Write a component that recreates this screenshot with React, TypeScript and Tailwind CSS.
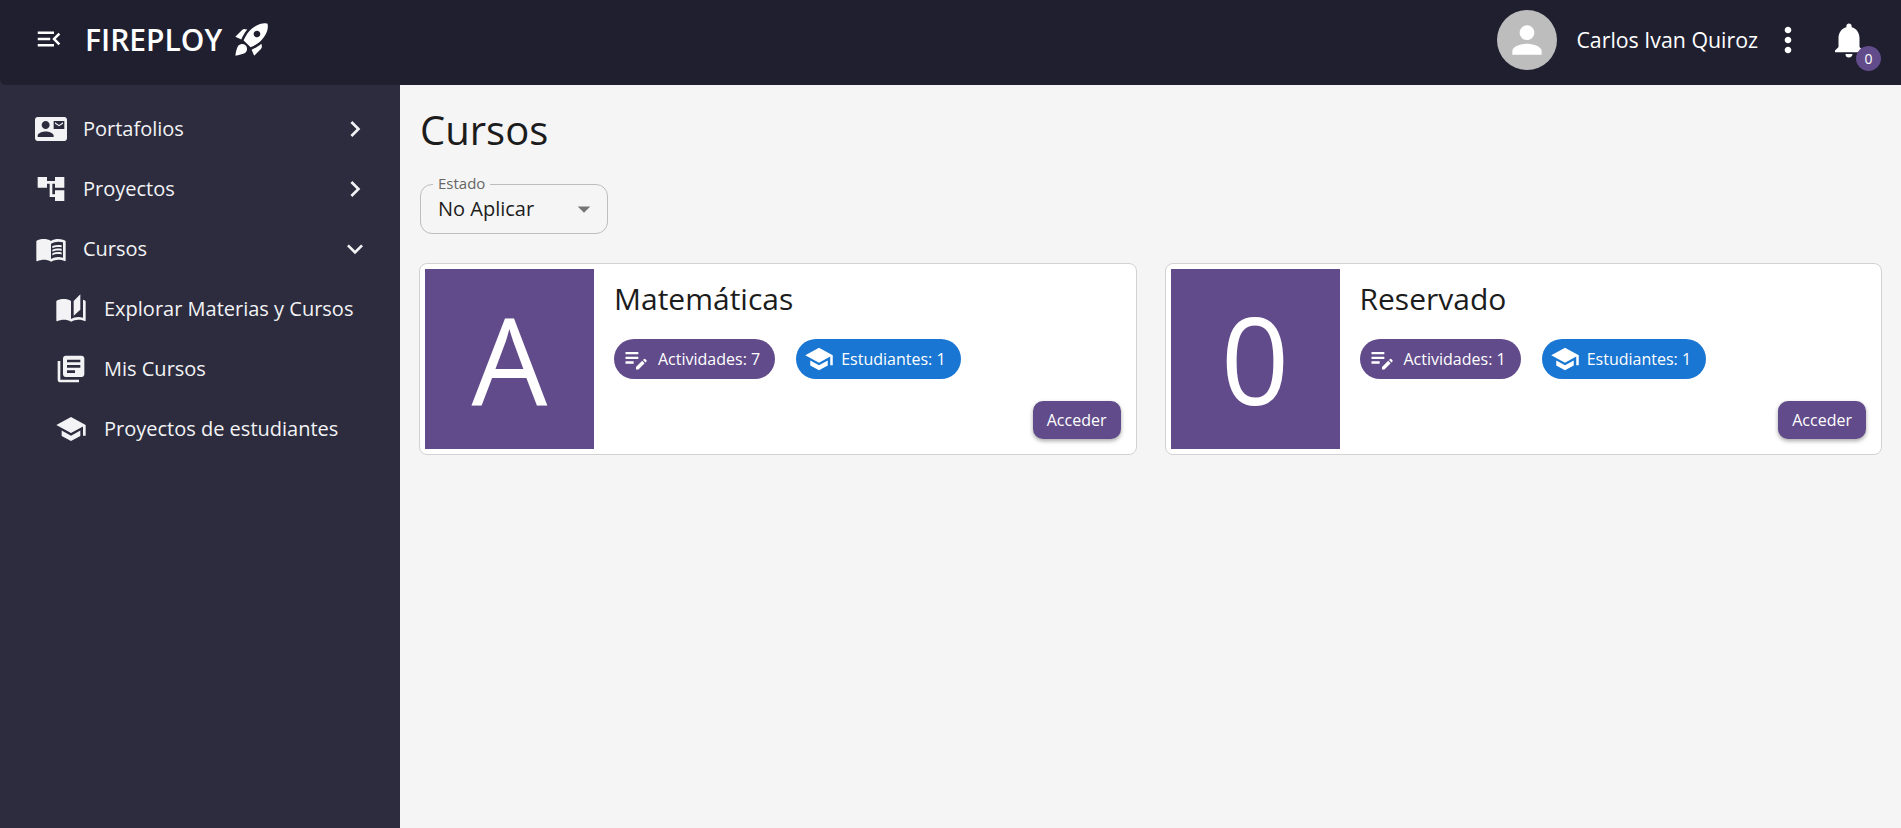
import type { ReactNode } from 'react';
import {
  MdMenuOpen,
  MdContactMail,
  MdAccountTree,
  MdMenuBook,
  MdAutoStories,
  MdLibraryBooks,
  MdSchool,
  MdEditNote,
  MdMoreVert,
  MdNotifications,
  MdPerson,
  MdChevronRight,
  MdExpandMore,
  MdArrowDropDown,
  MdRocketLaunch,
} from 'react-icons/md';

const courses = [
  { letter: 'A', title: 'Matemáticas', activities: 7, students: 1 },
  { letter: '0', title: 'Reservado', activities: 1, students: 1 },
];

function NavItem({ icon, label, chevron, sub }: { icon: ReactNode; label: string; chevron?: ReactNode; sub?: boolean }) {
  return (
    <div className={`flex h-[60px] items-center text-[20px] text-[#f3f3f5] ${sub ? 'pl-[54px] [&>span:first-child]:mr-[16px]' : 'pl-[34px] [&>span:first-child]:mr-[15px]'} pr-[29px]`}>
      <span className="flex w-[34px] items-center justify-center text-[32px]">{icon}</span>
      <span className="flex-1 whitespace-nowrap">{label}</span>
      {chevron}
    </div>
  );
}

function CourseCard({ letter, title, activities, students }: (typeof courses)[number]) {
  return (
    <div className="flex h-[192px] rounded-[8px] border border-[#d2d2d2] bg-white p-[5px]">
      <div className="flex h-[180px] w-[169px] shrink-0 items-center justify-center bg-[#614b8a] text-[120px] leading-none text-white">
        {letter}
      </div>
      <div className="flex flex-1 flex-col pl-[20px] pr-[10px]">
        <div className="mt-[10px] text-[30px] leading-[40px] text-[#1c1c1c]">{title}</div>
        <div className="mt-[20px] flex gap-[21px]">
          <div className="flex h-[40px] items-center gap-[8px] rounded-full bg-[#614b8a] pl-[8px] pr-[15px] text-[16px] text-white">
            <MdEditNote className="text-[28px]" />
            Actividades: {activities}
          </div>
          <div className="flex h-[40px] items-center gap-[7px] rounded-full bg-[#1976d2] pl-[8px] pr-[15px] text-[16px] text-white">
            <MdSchool className="text-[30px]" />
            Estudiantes: {students}
          </div>
        </div>
        <div className="mt-auto mb-[10px] flex justify-end">
          <button className="h-[38px] rounded-[10px] bg-[#614b8a] px-[14px] text-[16px] font-medium text-white shadow-[0_2px_4px_rgba(0,0,0,0.35)]">
            Acceder
          </button>
        </div>
      </div>
    </div>
  );
}

export default function App() {
  return (
    <div className="flex h-[828px] flex-col overflow-hidden bg-[#2c2c3e] font-['Open_Sans',sans-serif]">
      <header className="flex h-[85px] shrink-0 items-center rounded-bl-[6px] bg-[#1f1f30] pb-[5px] pl-[34px] pr-[24px] text-white">
        <MdMenuOpen className="mb-[2px] text-[30px]" />
        <span className="mb-[2px] ml-[21px] text-[30px] font-semibold">FIREPLOY</span>
        <MdRocketLaunch className="mb-[2px] ml-[10px] text-[40px]" />
        <div className="ml-auto flex items-center">
          <div className="flex h-[60px] w-[60px] items-center justify-center rounded-full bg-[#bdbdbd]">
            <MdPerson className="text-[44px]" />
          </div>
          <span className="ml-[19px] text-[21.33px]">Carlos Ivan Quiroz</span>
          <MdMoreVert className="ml-[10px] text-[40px]" />
          <div className="relative ml-[20px] mr-[7px]">
            <MdNotifications className="text-[42px]" />
            <span className="absolute -bottom-[10px] -right-[11px] flex h-[25px] w-[25px] items-center justify-center rounded-full bg-[#614b8a] text-[14px] font-medium">
              0
            </span>
          </div>
        </div>
      </header>
      <div className="flex flex-1">
        <aside className="w-[400px] shrink-0 bg-[#2c2c3e] pt-[14px]">
          <NavItem icon={<MdContactMail />} label="Portafolios" chevron={<MdChevronRight className="text-[32px]" />} />
          <NavItem icon={<MdAccountTree />} label="Proyectos" chevron={<MdChevronRight className="text-[32px]" />} />
          <NavItem icon={<MdMenuBook />} label="Cursos" chevron={<MdExpandMore className="text-[32px]" />} />
          <NavItem sub icon={<MdAutoStories />} label="Explorar Materias y Cursos" />
          <NavItem sub icon={<MdLibraryBooks />} label="Mis Cursos" />
          <NavItem sub icon={<MdSchool />} label="Proyectos de estudiantes" />
        </aside>
        <main className="flex-1 bg-[#f5f5f5] pl-[19px] pr-[19px]">
          <h1 className="mt-[17px] pl-[1px] text-[40px] leading-[56px] text-[#1c1c1c]">Cursos</h1>
          <div className="relative ml-[1px] mt-[26px] flex h-[50px] w-[188px] items-center rounded-[12px] border border-[#bdbdbd] pl-[17px] pr-[8px] text-[20px] text-[#1c1c1c]">
            <span className="absolute -top-[12px] left-[12px] bg-[#f5f5f5] px-[5px] text-[15px] leading-[20px] text-[#666666]">Estado</span>
            <span className="flex-1">No Aplicar</span>
            <MdArrowDropDown className="text-[30px] text-[#757575]" />
          </div>
          <div className="mt-[29px] grid grid-cols-2 gap-[28px]">
            {courses.map((course) => (
              <CourseCard key={course.title} {...course} />
            ))}
          </div>
        </main>
      </div>
    </div>
  );
}
